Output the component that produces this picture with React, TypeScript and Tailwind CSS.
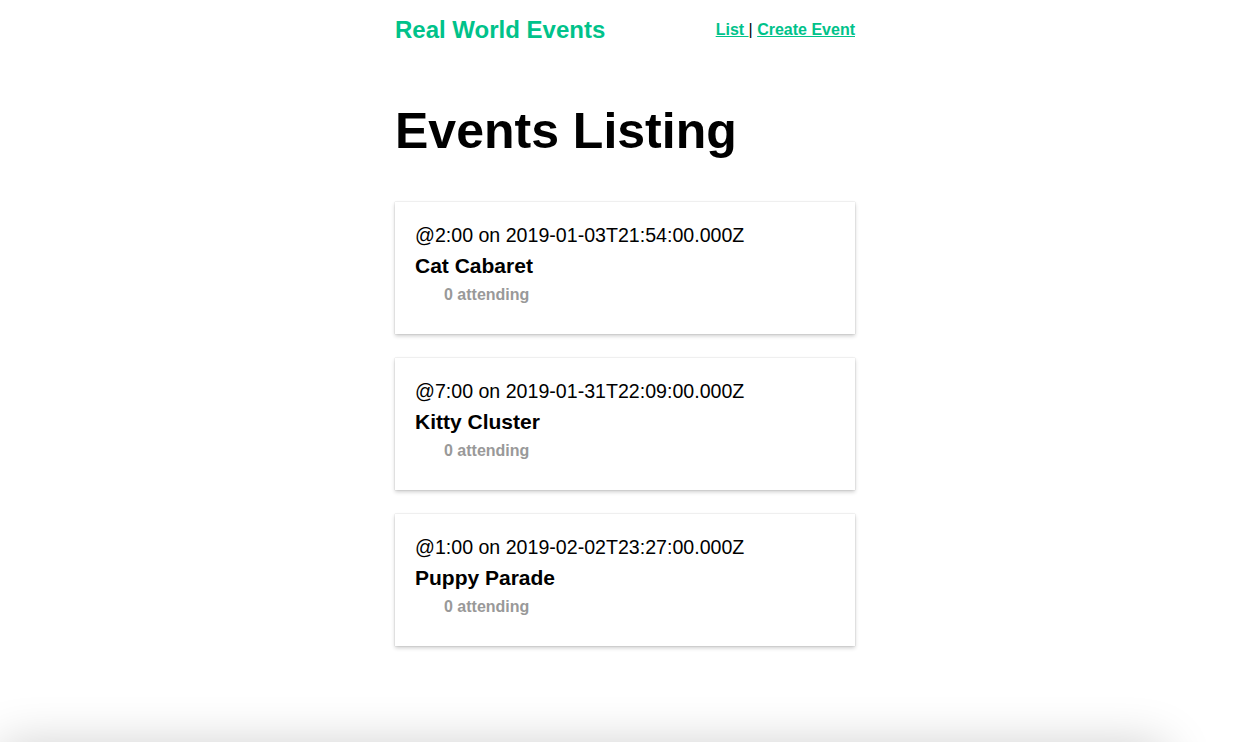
const events = [
  { time: "2:00", date: "2019-01-03T21:54:00.000Z", title: "Cat Cabaret", attendees: 0 },
  { time: "7:00", date: "2019-01-31T22:09:00.000Z", title: "Kitty Cluster", attendees: 0 },
  { time: "1:00", date: "2019-02-02T23:27:00.000Z", title: "Puppy Parade", attendees: 0 },
];

const EventCard = ({ event }: { event: (typeof events)[number] }) => (
  <div className="bg-white px-5 pt-5 pb-[27px] shadow-[0_2px_4px_rgba(0,0,0,0.2),0_0_1px_rgba(0,0,0,0.25)]">
    <span className="block text-[19.6px] leading-[27px] font-light text-black">
      @{event.time} on {event.date}
    </span>
    <h4 className="mt-[3px] text-[21px] leading-[28px] font-bold text-black">{event.title}</h4>
    <div className="mt-[3px] pl-[29px] text-[16px] leading-[24px] font-bold text-[#999]">
      {event.attendees} attending
    </div>
  </div>
);

export default function App() {
  return (
    <div className="h-screen bg-white font-['Liberation_Sans',Arial,sans-serif] overflow-hidden">
      <div className="mx-auto w-[460px]">
        {/* --- NAV --- */}
        <nav className="flex h-[60px] items-center justify-between">
          <a href="#" className="text-[24px] leading-[28px] font-bold text-[#00c28a]">
            Real World Events
          </a>
          <div className="text-[16px] leading-[20px] font-bold">
            <a href="#" className="text-[#00c28a] underline">List </a>
            <span className="font-normal text-black">|</span>{" "}
            <a href="#" className="text-[#00c28a] underline">Create Event</a>
          </div>
        </nav>

        <h1 className="mt-[46px] text-[50px] leading-[50px] font-bold text-black">Events Listing</h1>

        <div className="mt-[46px] flex flex-col gap-6">
          {events.map((event) => (
            <EventCard key={event.title} event={event} />
          ))}
        </div>
      </div>

      {/* bar just below the fold, only its shadow shows */}
      <div className="mt-[99px] h-[80px] w-[1165px] bg-white shadow-[0_0_50px_rgba(0,0,0,0.2)]" />
    </div>
  );
}
